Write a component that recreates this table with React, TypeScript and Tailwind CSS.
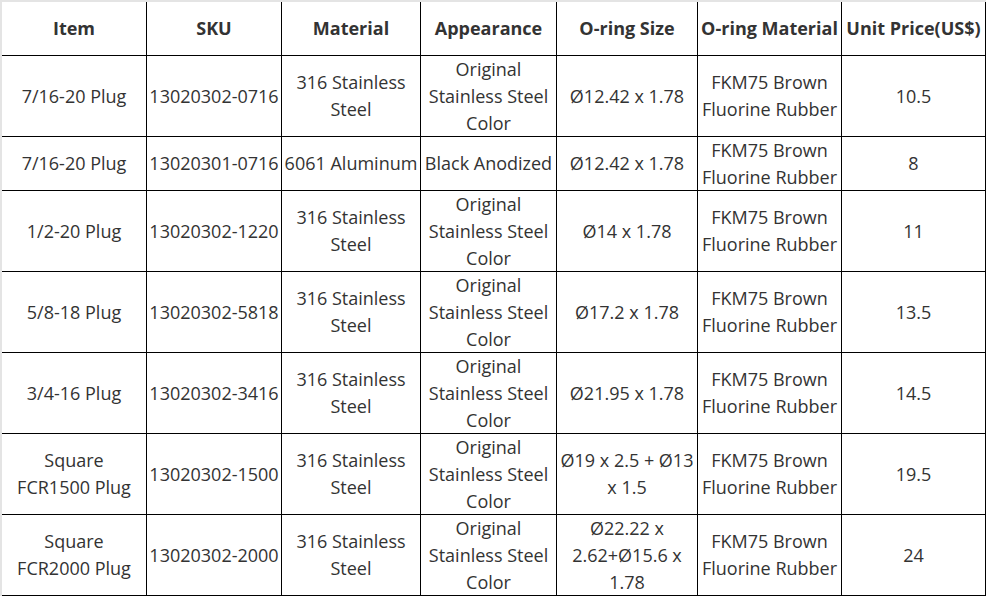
import React from "react";

const headers = ["Item", "SKU", "Material", "Appearance", "O-ring Size", "O-ring Material", "Unit Price(US$)"];

const rows: string[][] = [
  ["7/16-20 Plug", "13020302-0716", "316 Stainless|Steel", "Original|Stainless Steel|Color", "Ø12.42 x 1.78", "FKM75 Brown|Fluorine Rubber", "10.5"],
  ["7/16-20 Plug", "13020301-0716", "6061 Aluminum", "Black Anodized", "Ø12.42 x 1.78", "FKM75 Brown|Fluorine Rubber", "8"],
  ["1/2-20 Plug", "13020302-1220", "316 Stainless|Steel", "Original|Stainless Steel|Color", "Ø14 x 1.78", "FKM75 Brown|Fluorine Rubber", "11"],
  ["5/8-18 Plug", "13020302-5818", "316 Stainless|Steel", "Original|Stainless Steel|Color", "Ø17.2 x 1.78", "FKM75 Brown|Fluorine Rubber", "13.5"],
  ["3/4-16 Plug", "13020302-3416", "316 Stainless|Steel", "Original|Stainless Steel|Color", "Ø21.95 x 1.78", "FKM75 Brown|Fluorine Rubber", "14.5"],
  ["Square|FCR1500 Plug", "13020302-1500", "316 Stainless|Steel", "Original|Stainless Steel|Color", "Ø19 x 2.5 + Ø13|x 1.5", "FKM75 Brown|Fluorine Rubber", "19.5"],
  ["Square|FCR2000 Plug", "13020302-2000", "316 Stainless|Steel", "Original|Stainless Steel|Color", "Ø22.22 x|2.62+Ø15.6 x|1.78", "FKM75 Brown|Fluorine Rubber", "24"],
];

export default function App() {
  return (
    <div className="w-[987px] h-[597px] bg-white">
      <div
        className="border-t-2 border-l-2 border-[#e4e4e4] w-[986px] text-[#333] text-[18px] leading-[27px]"
        style={{ fontFamily: '"Open Sans", "Noto Sans", sans-serif' }}
      >
        <div className="grid grid-cols-[145px_135px_139px_136px_141px_144px_144px] grid-rows-[54px_81px_54px_81px_81px_81px_81px_81px]">
          {headers.map((h, i) => (
            <div
              key={"h" + i}
              className="flex items-center justify-center text-center border-r border-b border-black font-bold whitespace-nowrap"
            >
              {h}
            </div>
          ))}
          {rows.map((r, ri) =>
            r.map((c, ci) => (
              <div
                key={ri + "-" + ci}
                className="flex flex-col items-center justify-center text-center border-r border-b border-black whitespace-nowrap"
              >
                {c.split("|").map((line, li) => (
                  <span key={li}>{line}</span>
                ))}
              </div>
            ))
          )}
        </div>
      </div>
    </div>
  );
}
